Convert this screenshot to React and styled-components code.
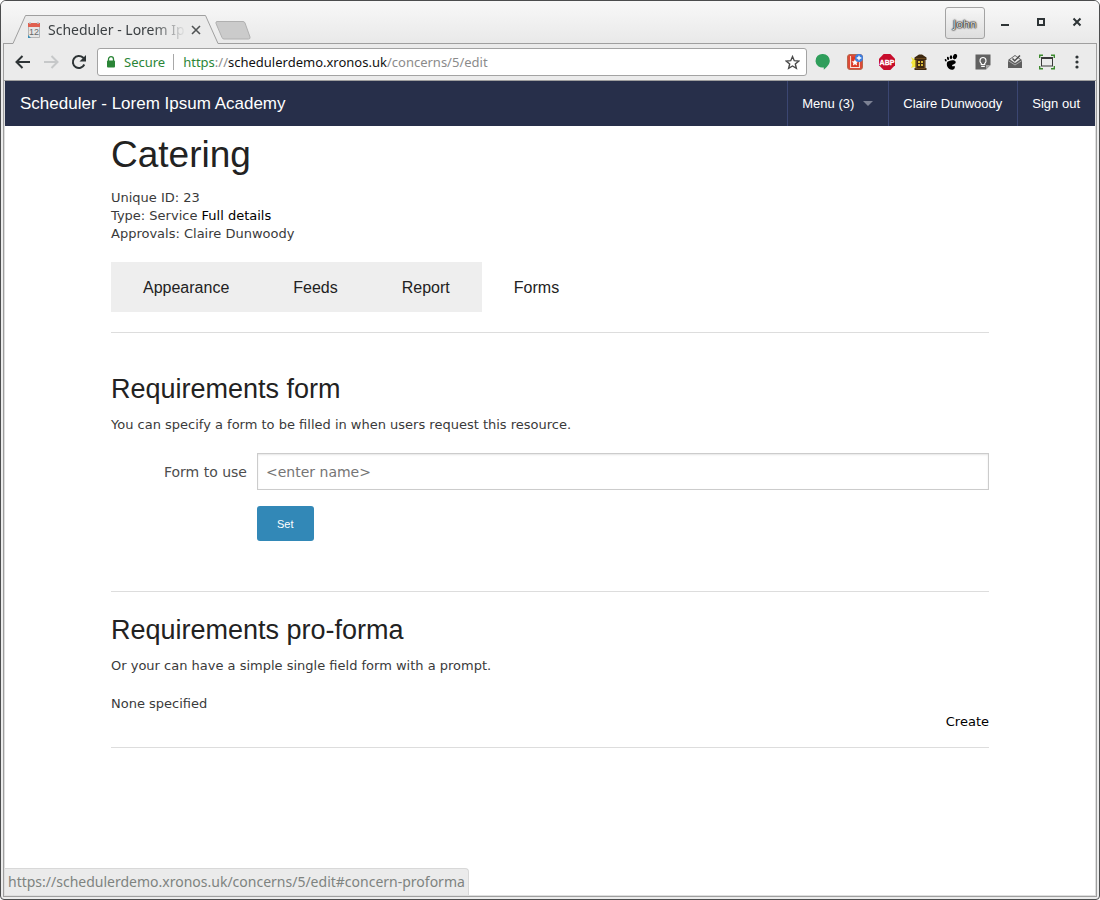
import styled, { createGlobalStyle } from "styled-components";
import { useState } from "react";

const GlobalStyle = createGlobalStyle`
  * {
    box-sizing: border-box;
  }
  body {
    margin: 0;
    background: #ffffff;
    font-family: Verdana, "DejaVu Sans", sans-serif;
  }
  h1, h2, p, ul {
    margin: 0;
    padding: 0;
  }
  button {
    padding: 0;
    border: 0;
    background: transparent;
    cursor: pointer;
  }
  a {
    text-decoration: none;
  }
  svg {
    display: block;
    flex-shrink: 0;
  }
`;

const uiFont = `"Noto Sans", "Open Sans", sans-serif`;
const headingFont = `"Liberation Sans", Arial, sans-serif`;

/* browser window */

const Window = styled.div`
  position: relative;
  display: flex;
  flex-direction: column;
  min-height: 100vh;
  border: 1px solid #4c4d4e;
  border-radius: 6px 6px 4px 4px;
  background: #ececec;
  overflow: hidden;
`;

const TitleBar = styled.div`
  display: flex;
  align-items: flex-end;
  height: 42px;
  padding-left: 11px;
  padding-right: 12px;
  background: linear-gradient(#f8f8f8, #e9e9e9);
`;

const Tab = styled.div`
  position: relative;
  z-index: 1;
  display: flex;
  align-items: center;
  width: 207px;
  height: 29px;
  margin-bottom: -1px;
  padding: 0 18px 0 16px;
`;

const TabShape = styled.svg`
  position: absolute;
  left: 0;
  top: 0;
  z-index: -1;
`;

const TabTitle = styled.span`
  flex: 1;
  margin-left: 8px;
  font-family: ${uiFont};
  font-size: 14px;
  line-height: 20px;
  color: #3c4043;
  white-space: nowrap;
  mask-image: linear-gradient(to right, #000 75%, transparent 100%);
`;

const TabClose = styled.button`
  margin-left: 5px;
`;

const NewTab = styled.button`
  margin: 0 auto 3px -4px;
`;

const UserButton = styled.button`
  align-self: flex-start;
  width: 40px;
  height: 32px;
  margin-top: 6px;
  margin-right: 10px;
  border: 1px solid #a3a3a3;
  border-radius: 3px;
  background: linear-gradient(#f6f6f6, #dedede);
  font-family: ${uiFont};
  font-size: 11px;
  color: #dcdcdc;
  text-shadow: 0 0 1px #222, 0 0 1px #222, 0 0 2px #444, 0 0 2px #444;
`;

const WindowControls = styled.div`
  display: flex;
  gap: 16px;
  margin-bottom: 11px;
`;

const Frame = styled.div`
  flex: 1;
  display: flex;
  flex-direction: column;
  margin: 0 2px 2px;
  border: 1px solid #9f9f9f;
  background: #dedede;
`;

const Toolbar = styled.div`
  display: flex;
  align-items: center;
  height: 37px;
  padding: 0 13px 0 11px;
  border-bottom: 1px solid #9f9f9f;
  background: #ebebeb;
`;

const NavButtons = styled.div`
  display: flex;
  gap: 12px;
  margin-right: 10px;
`;

const AddressBar = styled.div`
  flex: 1;
  display: flex;
  align-items: center;
  height: 28px;
  padding: 0 6px 0 8px;
  border: 1px solid #a3a3a3;
  border-radius: 3px;
  background: #ffffff;
  font-family: ${uiFont};
  font-size: 13px;
  color: #8b8b8b;
`;

const Secure = styled.span`
  margin-left: 8px;
  padding-right: 8px;
  border-right: 1px solid #a8a8a8;
  line-height: 16px;
  color: #2b8537;
`;

const Url = styled.span`
  flex: 1;
  margin-left: 9px;
  white-space: nowrap;
`;

const Scheme = styled.span`
  color: #2b8537;
`;

const Host = styled.span`
  color: #111111;
`;

const Extensions = styled.div`
  display: flex;
  align-items: center;
  gap: 16px;
  margin-left: 8px;
`;

const StatusBar = styled.div`
  position: absolute;
  left: 4px;
  bottom: 4px;
  height: 27px;
  padding: 0 3px;
  border: 1px solid #d8d8d8;
  border-width: 1px 1px 0 0;
  border-radius: 0 4px 0 0;
  background: #ebebeb;
  font-family: ${uiFont};
  font-size: 14px;
  line-height: 26px;
  color: #7e8380;
`;

/* page */

const Page = styled.div`
  flex: 1;
  margin: 0 1px 1px;
  background: #ffffff;
`;

const TopBar = styled.nav`
  display: flex;
  justify-content: space-between;
  height: 45px;
  background: #272f4a;
  font-family: ${headingFont};
  line-height: 45px;
`;

const SiteName = styled.a`
  padding-left: 15px;
  font-size: 17px;
  color: #ffffff;
`;

const TopMenu = styled.ul`
  display: flex;
  list-style: none;
`;

const TopMenuLink = styled.a`
  display: flex;
  align-items: center;
  gap: 9px;
  padding: 0 15px 0 14px;
  border-left: 1px solid #3b4672;
  font-size: 13px;
  color: #ffffff;
`;

const Caret = styled.span`
  border: 5px solid transparent;
  border-top-color: #7d8294;
  border-bottom: 0;
`;

const Content = styled.main`
  padding: 3px 106px 0;
  font-size: 13px;
  line-height: 18px;
  color: #3a3a3a;
`;

const PageTitle = styled.h1`
  margin-bottom: 8px;
  font-family: ${headingFont};
  font-size: 37px;
  font-weight: normal;
  line-height: 52px;
  color: #222222;
`;

const SectionTitle = styled.h2`
  margin-bottom: 8px;
  font-family: ${headingFont};
  font-size: 27px;
  font-weight: normal;
  line-height: 38px;
  color: #222222;
`;

const TextLink = styled.a`
  color: #000000;
`;

const Tabs = styled.ul`
  display: flex;
  margin: 19px 0 20px;
  list-style: none;
`;

const TabButton = styled.button`
  padding: 2px 32px 0;
  background: ${(props) => (props.$active ? "#ffffff" : "#eeeeee")};
  font-family: ${headingFont};
  font-size: 16px;
  line-height: 48px;
  color: #222222;
`;

const Section = styled.section`
  padding: ${(props) => props.$top} 0 ${(props) => props.$bottom};
  border-top: 1px solid #dddddd;
`;

const Form = styled.form`
  display: grid;
  grid-template-columns: 136px 1fr;
  gap: 16px 10px;
  align-items: center;
  margin-top: 19px;
`;

const Label = styled.label`
  text-align: right;
  font-size: 14px;
  color: #4d4d4d;
`;

const TextInput = styled.input`
  width: 100%;
  height: 37px;
  padding: 0 8px;
  border: 1px solid #cccccc;
  box-shadow: inset 0 1px 2px rgba(0, 0, 0, 0.1);
  font-family: inherit;
  font-size: 14px;
  color: #333333;
  &::placeholder {
    color: #757575;
    opacity: 1;
  }
`;

const SubmitButton = styled.button`
  grid-column: 2;
  justify-self: start;
  height: 35px;
  padding: 0 20px;
  border-radius: 3px;
  background: #3288b7;
  font-family: ${headingFont};
  font-size: 11px;
  color: #ffffff;
`;

const Empty = styled.p`
  margin-top: 20px;
`;

const Actions = styled.div`
  text-align: right;
`;

const LastSection = styled(Section)`
  border-bottom: 1px solid #dddddd;
`;

/* icons */

function CalendarIcon() {
  return (
    <svg width="12" height="16" viewBox="0 0 12 16">
      <path d="M.5 4h11v11.500H.5z" fill="#e6e6e6" stroke="#b5b5b5" />
      <path d="M0 1h12v4H0z" fill="#e0604f" />
      <path d="M2 0v2M10 0v2" stroke="#b8c0c4" strokeWidth="1.500" />
      <path d="M0 13l3 3H0z" fill="#3b8db5" />
      <text x="6" y="13" textAnchor="middle" fontSize="9" fontFamily="Liberation Sans, sans-serif" fill="#6a6a6a">
        12
      </text>
    </svg>
  );
}

function BackIcon({ flip }) {
  return (
    <svg width="16" height="16" viewBox="0 0 16 16">
      <path
        d={flip ? "M1 8h13M8.500 2l6 6-6 6" : "M15 8H2M7.500 2l-6 6 6 6"}
        fill="none"
        stroke={flip ? "#c6c8c9" : "#2e3436"}
        strokeWidth="2"
      />
    </svg>
  );
}

function ReloadIcon() {
  return (
    <svg width="16" height="16" viewBox="0 0 16 16">
      <path d="M13.300 10.500A6 6 0 1 1 12 3.600l1.500 1.500" fill="none" stroke="#2e3436" strokeWidth="2" />
      <path d="M15 1v6.500H8.500z" fill="#2e3436" />
    </svg>
  );
}

function LockIcon() {
  return (
    <svg width="10" height="12" viewBox="0 0 10 12">
      <path d="M2.500 5V3.200a2.500 2.500 0 0 1 5 0V5" fill="none" stroke="#2b8537" strokeWidth="1.300" />
      <rect x="1" y="4.500" width="8" height="7" rx="1" fill="#2b8537" />
    </svg>
  );
}

function StarIcon() {
  return (
    <svg width="15" height="15" viewBox="0 0 24 24">
      <path
        d="M12 2.500l2.800 6.600 7.200.6-5.500 4.700 1.700 7-6.200-3.800-6.200 3.800 1.700-7L2 9.700l7.200-.6z"
        fill="none"
        stroke="#4a4a4a"
        strokeWidth="2.200"
      />
    </svg>
  );
}

function HangoutsIcon() {
  return (
    <svg width="16" height="18" viewBox="0 0 16 18">
      <path d="M8 1a6.800 6.800 0 0 1 6.800 6.800c0 3.600-3 6.400-6 8.900v-2.300A6.800 6.800 0 1 1 8 1z" fill="#2f9e5b" />
    </svg>
  );
}

function BookmarkIcon() {
  return (
    <svg width="16" height="16" viewBox="0 0 16 16">
      <rect x=".5" y=".5" width="15" height="15" rx="2.500" fill="#dc4a38" stroke="#b9684b" />
      <path d="M3.500 2v12M12.500 8v6" stroke="#f6d5c8" />
      <path d="M5 3h6v10H5z" fill="#dc3a24" />
      <path d="M8 5l1 2.200 2.300.2-1.700 1.600.5 2.400L8 10.200l-2.100 1.200.5-2.400-1.700-1.600 2.300-.2z" fill="#ffffff" />
      <path d="M3 13.500h10" stroke="#f6e6e0" />
      <circle cx="12" cy="4" r="4" fill="#3f7fdd" />
      <path d="M12 1.700v4.600M9.700 4h4.600" stroke="#ffffff" strokeWidth="1.300" />
    </svg>
  );
}

function AdblockIcon() {
  return (
    <svg width="16" height="16" viewBox="0 0 16 16">
      <path d="M4.700 0h6.600L16 4.700v6.600L11.300 16H4.700L0 11.300V4.700z" fill="#c70d2c" />
      <text
        x="8"
        y="11"
        textAnchor="middle"
        fontSize="7"
        fontWeight="bold"
        fontFamily="Liberation Sans, sans-serif"
        fill="#ffffff"
        stroke="#ffffff"
        strokeWidth=".3"
      >
        ABP
      </text>
    </svg>
  );
}

function LanternIcon() {
  return (
    <svg width="16" height="16" viewBox="0 0 16 16">
      <path d="M0 3l3 2 3-1v10l-3-1-3 1 1.500-3L0 8.500l1.500-2z" fill="#f3e63c" />
      <path d="M8 .5h3l4.500 3V6h-1v8h1v2h-12v-2h1V6h-1V3.500z" fill="#3d2810" />
      <path d="M4.500 4.500h10M4.500 14.500h10M5.500 6v8M13.500 6v8" stroke="#6b481d" />
      <path d="M7 7h2v2H7zM10 7h2v2h-2zM7 10h2v2H7zM10 10h2v2h-2z" fill="#d9b93a" />
    </svg>
  );
}

function FootIcon() {
  return (
    <svg width="16" height="16" viewBox="0 0 16 16">
      <path
        d="M4 8.500C5 6.300 12.700 5 12.700 8.200c0 2-3.600 2-3.600 3.500 0 1.200 1.500.2 2.200.3 1.200.3.700 3.800-2.400 3.800C5.300 15.800 3.100 11.500 4 8.500z"
        fill="#000000"
      />
      <ellipse cx="12" cy="2.600" rx="2" ry="2.700" transform="rotate(20 12 2.600)" fill="#000000" />
      <ellipse cx="8" cy="3.200" rx="1.200" ry="1.900" fill="#000000" />
      <ellipse cx="5" cy="4.400" rx="1" ry="1.600" transform="rotate(-15 5 4.400)" fill="#000000" />
      <ellipse cx="2.700" cy="6.200" rx=".9" ry="1.300" transform="rotate(-25 2.700 6.200)" fill="#000000" />
    </svg>
  );
}

function KeepIcon() {
  return (
    <svg width="16" height="16" viewBox="0 0 16 16">
      <path d="M.5.5h15v10.500L11 15.500H.5z" fill="#616161" />
      <path d="M15.500 11L11 15.500V11z" fill="#a6a6a6" />
      <path d="M6.300 9.500C4 7.800 4.800 3.500 8 3.500s4 4.300 1.700 6v1H6.300z" fill="none" stroke="#ffffff" strokeWidth="1.200" />
      <path d="M6.200 12.300h3.600" stroke="#ffffff" strokeWidth="1.200" />
    </svg>
  );
}

function InboxIcon() {
  return (
    <svg width="16" height="16" viewBox="0 0 16 16">
      <path d="M1 6l7-5 7 5v8H1z" fill="#5f5f5f" />
      <path d="M3 5.500L8 2l5 3.500L8 9z" fill="#ececec" />
      <path d="M5.500 4.500l2.200 2.200L13 1.500" fill="none" stroke="#4c4c4c" strokeWidth="1.500" />
      <path d="M1 6.500l7 4.500 7-4.500" fill="none" stroke="#bdbdbd" strokeWidth=".8" />
    </svg>
  );
}

function ScreenIcon() {
  return (
    <svg width="16" height="16" viewBox="0 0 16 16">
      <path d="M.7 4V1.200H4M12 1.200h3.300V4M.7 12v2.800H4M12 14.800h3.300V12" fill="none" stroke="#3c8a2e" strokeWidth="1.400" />
      <rect x="2.500" y="4" width="11" height="8" fill="none" stroke="#3a3a3a" />
      <path d="M2 4h12" stroke="#3a3a3a" strokeWidth="2" />
    </svg>
  );
}

function DotsIcon() {
  return (
    <svg width="12" height="16" viewBox="0 0 12 16">
      <circle cx="6" cy="3" r="1.600" fill="#2e3436" />
      <circle cx="6" cy="8" r="1.600" fill="#2e3436" />
      <circle cx="6" cy="13" r="1.600" fill="#2e3436" />
    </svg>
  );
}

const extensions = [
  { name: "Hangouts", Icon: HangoutsIcon },
  { name: "Bookmark", Icon: BookmarkIcon },
  { name: "Adblock", Icon: AdblockIcon },
  { name: "Lantern", Icon: LanternIcon },
  { name: "Gnome", Icon: FootIcon },
  { name: "Keep", Icon: KeepIcon },
  { name: "Inbox", Icon: InboxIcon },
  { name: "Screen capture", Icon: ScreenIcon },
  { name: "Customise", Icon: DotsIcon },
];

const controls = [
  { name: "Minimise", d: "M6 13h8" },
  { name: "Maximise", d: "M7 7h6v6H7z" },
  { name: "Close", d: "M6.500 6.500l7 7M13.500 6.500l-7 7" },
];

const tabs = ["Appearance", "Feeds", "Report", "Forms"];

function BrowserTitleBar() {
  return (
    <TitleBar>
      <Tab>
        <TabShape width="207" height="29" viewBox="0 0 207 29">
          <path
            d="M0 28.500h1l12.500-28H193.500l12.500 28h1V29H0z"
            fill="#ebebeb"
          />
          <path
            d="M0 28.500h1l12.500-28H193.500l12.500 28h1"
            fill="none"
            stroke="#9f9f9f"
          />
        </TabShape>
        <CalendarIcon />
        <TabTitle>Scheduler - Lorem Ip</TabTitle>
        <TabClose aria-label="Close tab">
          <svg width="10" height="10" viewBox="0 0 10 10">
            <path d="M1 1l8 8M9 1L1 9" stroke="#505354" strokeWidth="1.600" />
          </svg>
        </TabClose>
      </Tab>
      <NewTab aria-label="New tab">
        <svg width="36" height="19" viewBox="0 0 36 19">
          <path
            d="M2 .5h26q1.500 0 2 1.500l5 14q.5 2-1.500 2H9q-1.500 0-2-1.500L1 2.500Q.5.500 2 .5z"
            fill="#cbcbcb"
            stroke="#b0b0b0"
          />
        </svg>
      </NewTab>
      <UserButton>John</UserButton>
      <WindowControls>
        {controls.map((control) => (
          <button key={control.name} aria-label={control.name}>
            <svg width="20" height="20" viewBox="0 0 20 20">
              <path d={control.d} fill="none" stroke="#2e3436" strokeWidth="2" />
            </svg>
          </button>
        ))}
      </WindowControls>
    </TitleBar>
  );
}

function BrowserToolbar() {
  return (
    <Toolbar>
      <NavButtons>
        <button aria-label="Back">
          <BackIcon />
        </button>
        <button aria-label="Forward">
          <BackIcon flip />
        </button>
        <button aria-label="Reload">
          <ReloadIcon />
        </button>
      </NavButtons>
      <AddressBar>
        <LockIcon />
        <Secure>Secure</Secure>
        <Url>
          <Scheme>https</Scheme>://<Host>schedulerdemo.xronos.uk</Host>
          /concerns/5/edit
        </Url>
        <button aria-label="Bookmark this page">
          <StarIcon />
        </button>
      </AddressBar>
      <Extensions>
        {extensions.map(({ name, Icon }) => (
          <button key={name} aria-label={name}>
            <Icon />
          </button>
        ))}
      </Extensions>
    </Toolbar>
  );
}

function App() {
  const [active, setActive] = useState("Forms");
  const [formName, setFormName] = useState("");

  const onSubmit = (e) => {
    e.preventDefault();
  };

  return (
    <>
      <GlobalStyle />
      <Window>
        <BrowserTitleBar />
        <Frame>
          <BrowserToolbar />
          <Page>
            <TopBar>
              <SiteName href="#home">Scheduler - Lorem Ipsum Academy</SiteName>
              <TopMenu>
                <li>
                  <TopMenuLink href="#menu">
                    Menu (3) <Caret />
                  </TopMenuLink>
                </li>
                <li>
                  <TopMenuLink href="#user">Claire Dunwoody</TopMenuLink>
                </li>
                <li>
                  <TopMenuLink href="#signout">Sign out</TopMenuLink>
                </li>
              </TopMenu>
            </TopBar>
            <Content>
              <PageTitle>Catering</PageTitle>
              <p>Unique ID: 23</p>
              <p>
                Type: Service <TextLink href="#details">Full details</TextLink>
              </p>
              <p>Approvals: Claire Dunwoody</p>
              <Tabs>
                {tabs.map((tab) => (
                  <li key={tab}>
                    <TabButton
                      $active={tab === active}
                      onClick={() => setActive(tab)}
                    >
                      {tab}
                    </TabButton>
                  </li>
                ))}
              </Tabs>
              <Section $top="37px" $bottom="50px">
                <SectionTitle>Requirements form</SectionTitle>
                <p>
                  You can specify a form to be filled in when users request this
                  resource.
                </p>
                <Form onSubmit={onSubmit}>
                  <Label htmlFor="form-name">Form to use</Label>
                  <TextInput
                    id="form-name"
                    type="text"
                    placeholder="<enter name>"
                    value={formName}
                    onChange={(e) => setFormName(e.target.value)}
                  />
                  <SubmitButton type="submit">Set</SubmitButton>
                </Form>
              </Section>
              <LastSection $top="19px" $bottom="16px">
                <SectionTitle>Requirements pro-forma</SectionTitle>
                <p>Or your can have a simple single field form with a prompt.</p>
                <Empty>None specified</Empty>
                <Actions>
                  <TextLink href="#concern-proforma">Create</TextLink>
                </Actions>
              </LastSection>
            </Content>
          </Page>
        </Frame>
        <StatusBar>
          https://schedulerdemo.xronos.uk/concerns/5/edit#concern-proforma
        </StatusBar>
      </Window>
    </>
  );
}

export default App;
